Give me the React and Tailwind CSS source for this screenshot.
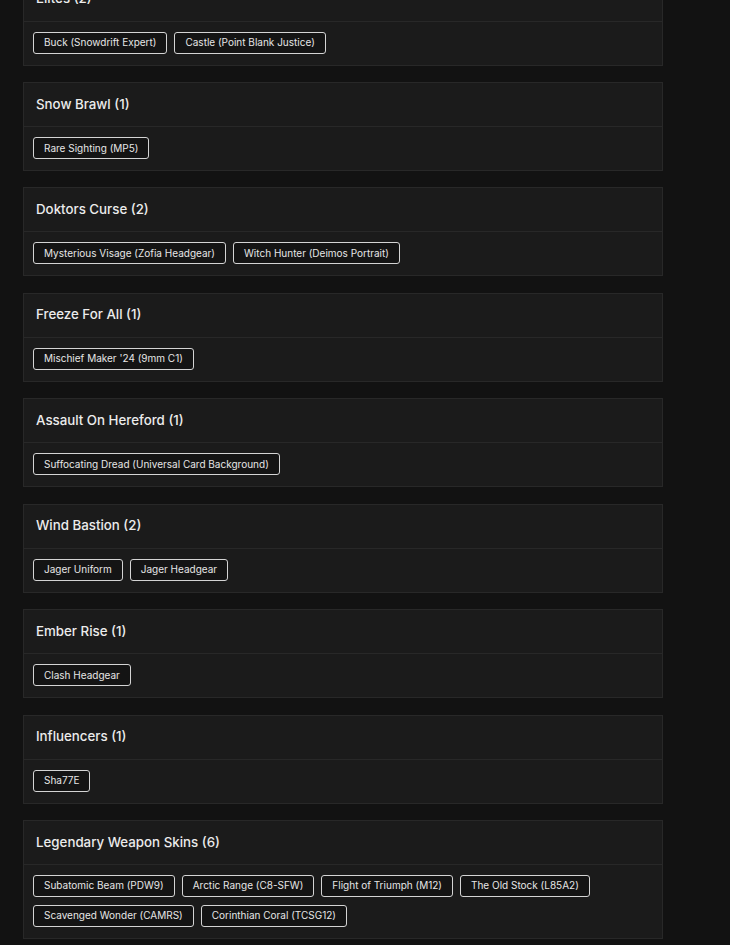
const sections = [
  { title: "Elites (2)", items: ["Buck (Snowdrift Expert)", "Castle (Point Blank Justice)"] },
  { title: "Snow Brawl (1)", items: ["Rare Sighting (MP5)"] },
  { title: "Doktors Curse (2)", items: ["Mysterious Visage (Zofia Headgear)", "Witch Hunter (Deimos Portrait)"] },
  { title: "Freeze For All (1)", items: ["Mischief Maker '24 (9mm C1)"] },
  { title: "Assault On Hereford (1)", items: ["Suffocating Dread (Universal Card Background)"] },
  { title: "Wind Bastion (2)", items: ["Jager Uniform", "Jager Headgear"] },
  { title: "Ember Rise (1)", items: ["Clash Headgear"] },
  { title: "Influencers (1)", items: ["Sha77E"] },
  {
    title: "Legendary Weapon Skins (6)",
    items: [
      "Subatomic Beam (PDW9)",
      "Arctic Range (C8-SFW)",
      "Flight of Triumph (M12)",
      "The Old Stock (L85A2)",
      "Scavenged Wonder (CAMRS)",
      "Corinthian Coral (TCSG12)",
    ],
  },
];

function Card({ title, items }) {
  return (
    <div className="mb-[16.43px] w-[640px] border border-[#282828] bg-[#1b1b1b]">
      <div className="flex h-[44px] items-center border-b border-[#282828] px-[12px] text-[13.3px] font-medium text-[#ececec]">
        {title}
      </div>
      <div className="flex flex-wrap gap-x-[7px] gap-y-[8px] px-[9px] pt-[10px] pb-[11px]">
        {items.map((it) => (
          <span
            key={it}
            className="flex h-[22px] items-center rounded-[3px] border border-[#d4d4d4] bg-[#141414] px-[10px] text-[10px] text-[#e6e6e6]"
          >
            {it}
          </span>
        ))}
      </div>
    </div>
  );
}

export default function App() {
  return (
    <div
      className="h-[945px] w-full overflow-hidden bg-[#121212]"
      style={{ fontFamily: "Inter, 'Noto Sans', sans-serif" }}
    >
      <div className="ml-[23px] mt-[-23.4px]">
        {sections.map((s) => (
          <Card key={s.title} {...s} />
        ))}
      </div>
    </div>
  );
}
